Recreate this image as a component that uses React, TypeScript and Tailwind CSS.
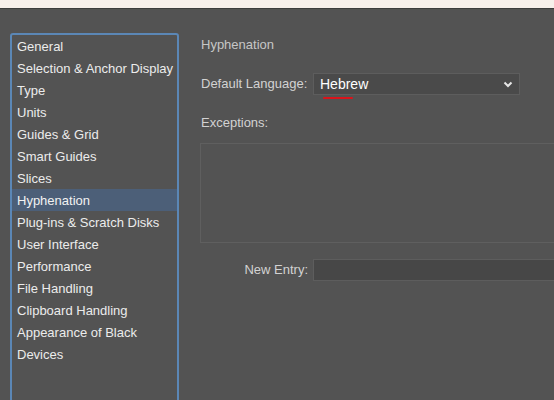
const categories = [
  "General",
  "Selection & Anchor Display",
  "Type",
  "Units",
  "Guides & Grid",
  "Smart Guides",
  "Slices",
  "Hyphenation",
  "Plug-ins & Scratch Disks",
  "User Interface",
  "Performance",
  "File Handling",
  "Clipboard Handling",
  "Appearance of Black",
  "Devices",
];

const active = "Hyphenation";

function Chevron() {
  return (
    <svg width="10" height="7" viewBox="0 0 10 7" className="text-[#e6e6e6]">
      <path d="M1.5 1.5 L5 5 L8.5 1.5" fill="none" stroke="currentColor" strokeWidth="2" />
    </svg>
  );
}

export default function App() {
  return (
    <div
      className="w-[554px] h-[400px] overflow-hidden bg-[#535353] flex flex-col text-[13px]"
      style={{ fontFamily: '"Liberation Sans", Arial, sans-serif' }}
    >
      {/* strip of the window behind the dialog */}
      <div className="h-[9px] shrink-0 bg-[#f7f0eb] border-b border-[#3d3d3d]" />

      <div className="flex flex-1 min-h-0">
        {/* category list */}
        <div className="ml-[10px] mt-[24px] w-[169px] h-[420px] shrink-0 rounded-[3px] border-2 border-[#5b87b6] bg-[#535353]">
          <ul className="flex flex-col">
            {categories.map((c) => (
              <li
                key={c}
                className={`h-[22px] flex items-center pl-[5px] whitespace-nowrap leading-none ${
                  c === active ? "bg-[#4c5f78] text-[#f2f2f2]" : "text-[#ececec]"
                }`}
              >
                {c}
              </li>
            ))}
          </ul>
        </div>

        {/* hyphenation settings */}
        <div className="ml-[22px] flex flex-col shrink-0">
          <div className="mt-[28px] h-[16px] leading-[16px] text-[#c6c6c6]">Hyphenation</div>

          <div className="mt-[20px] flex items-center h-[22px]">
            <span className="w-[112px] text-[#d2d2d2]">Default Language:</span>
            <div className="relative w-[207px] h-[22px] bg-[#4a4a4a] border border-[#5d5d5d] flex items-center justify-between pl-[6px] pr-[6px]">
              <span className="text-white text-[14px]">Hebrew</span>
              <span className="absolute left-[9px] top-[23px] w-[30px] h-[2px] rounded-full bg-[#d9141b]" />
              <Chevron />
            </div>
          </div>

          <div className="mt-[20px] h-[16px] leading-[16px] text-[#d2d2d2]">Exceptions:</div>

          <div className="mt-[12px] ml-[-1px] w-[420px] h-[100px] border border-[#5f5f5f] bg-[#535353]" />

          <div className="mt-[16px] flex items-center h-[22px]">
            <span className="w-[112px] pr-[5px] text-right text-[#d2d2d2]">New Entry:</span>
            <div className="w-[300px] h-[22px] bg-[#474747] border border-[#5d5d5d]" />
          </div>
        </div>
      </div>
    </div>
  );
}
